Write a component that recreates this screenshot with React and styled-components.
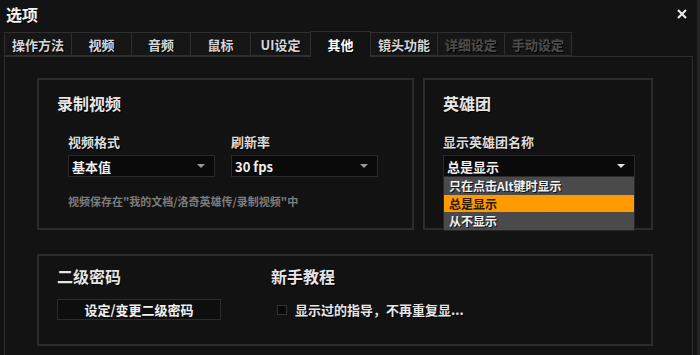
import React from 'react';
import styled, { createGlobalStyle } from 'styled-components';

const GlobalStyle = createGlobalStyle`
  html,
  body {
    margin: 0;
    padding: 0;
    background-color: #131313;
  }

  body {
    font-family: 'Noto Sans CJK SC', 'Noto Sans', sans-serif;
    color: #e8e8e8;
  }
`;

const StyledWindow = styled.div`
  position: relative;
  width: 700px;
  height: 355px;
  overflow: hidden;
  box-sizing: border-box;
  background-color: #131313;
  border-right: 3px solid #242424;
`;

const StyledTitleBar = styled.div`
  display: flex;
  justify-content: space-between;
  align-items: center;
  height: 31px;
  padding: 0 10px 4px 6px;
  box-sizing: border-box;
`;

const StyledTitle = styled.h1`
  margin: 0;
  font-size: 16px;
  font-weight: 700;
  line-height: 20px;
  color: #f2f2f2;
  text-shadow: 1px 1px 0 #000;
`;

const StyledClose = styled.button`
  display: flex;
  padding: 0;
  border: none;
  background: none;
  cursor: pointer;
`;

const StyledTabBar = styled.div`
  display: flex;
  align-items: flex-end;
  height: 25px;
  padding-left: 4px;
`;

const StyledTab = styled.div`
  position: relative;
  z-index: ${({ active }) => (active ? 1 : 0)};
  display: flex;
  justify-content: center;
  align-items: center;
  width: ${({ width }) => width}px;
  height: ${({ active }) => (active ? 26 : 24)}px;
  margin-right: -1px;
  margin-bottom: ${({ active }) => (active ? -1 : 0)}px;
  box-sizing: border-box;
  border: 1px solid #2f2f2f;
  border-bottom: ${({ active }) => (active ? 'none' : '1px solid #2f2f2f')};
  background-color: ${({ active }) => (active ? '#131313' : '#161616')};
  font-size: 13px;
  font-weight: 700;
  color: ${({ disabled, active }) => {
    if (disabled) return '#4d4d4d';
    if (active) return '#ffffff';
    return '#d6d6d6';
  }};
  text-shadow: ${({ disabled }) =>
    disabled ? '1px 1px 0 #000, -1px -1px 0 #262626' : '1px 1px 0 #000'};
`;

const StyledPanel = styled.div`
  width: 689px;
  height: 310px;
  margin-left: 4px;
  padding: 21px 0 0 32px;
  box-sizing: border-box;
  border: 1px solid #2f2f2f;
  border-bottom: none;
`;

const StyledRow = styled.div`
  display: flex;
  gap: 9px;
  width: 616px;
  margin-top: ${({ gapTop }) => gapTop || 0}px;
`;

const StyledGroup = styled.section`
  position: relative;
  display: ${({ columns }) => (columns ? 'flex' : 'block')};
  width: ${({ width }) => width}px;
  height: ${({ height }) => height}px;
  padding: ${({ padTop }) => padTop}px 0 0 18px;
  box-sizing: border-box;
  border: 2px solid #2c2c2c;
  background-color: #121212;
`;

const StyledColumn = styled.div`
  width: ${({ width }) => (width ? `${width}px` : 'auto')};
`;

const StyledHeading = styled.h2`
  margin: 0;
  font-size: 16px;
  font-weight: 700;
  line-height: 20px;
  color: #e6e6e6;
  text-shadow: 1px 1px 0 #000;
`;

const StyledFields = styled.div`
  display: flex;
  gap: 16px;
  margin: 21px 0 0 ${({ indent }) => indent || 0}px;
`;

const StyledField = styled.div`
  position: relative;
  width: ${({ width }) => width}px;
`;

const StyledLabel = styled.div`
  margin-bottom: 5px;
  font-size: 13px;
  font-weight: 700;
  line-height: 16px;
  color: #dcdcdc;
  text-shadow: 1px 1px 0 #000;
`;

const StyledSelect = styled.div`
  display: flex;
  justify-content: space-between;
  align-items: center;
  height: 22px;
  padding: 0 9px 0 3px;
  box-sizing: border-box;
  border: 1px solid #2a2a2a;
  background-color: #0a0a0a;
  font-size: 13px;
  font-weight: 700;
  color: #f0f0f0;
`;

const StyledArrow = styled.span`
  width: 0;
  height: 0;
  border-left: 4px solid transparent;
  border-right: 4px solid transparent;
  border-top: 4px solid ${({ bright }) => (bright ? '#e0e0e0' : '#9a9a9a')};
`;

const StyledHint = styled.p`
  margin: 17px 0 0 11px;
  font-size: 11px;
  font-weight: 700;
  line-height: 14px;
  color: #7c7c7c;
`;

const StyledMenu = styled.ul`
  position: absolute;
  top: 100%;
  left: 0;
  right: 0;
  margin: 0;
  padding: 0;
  list-style: none;
  border: 1px solid #262626;
  border-top: none;
`;

const StyledMenuItem = styled.li`
  height: 17.5px;
  overflow: hidden;
  padding-left: 5px;
  font-size: 12px;
  font-weight: 700;
  line-height: 17.5px;
  color: ${({ selected }) => (selected ? '#2a1800' : '#f2f2f2')};
  background-color: ${({ selected }) => (selected ? '#ff9a00' : '#4a4a4a')};
  text-shadow: ${({ selected }) => (selected ? 'none' : '1px 1px 0 #111')};
`;

const StyledButton = styled.button`
  width: 164px;
  height: 21px;
  margin-top: 13px;
  padding: 0;
  border: 1px solid #2c2c2c;
  background-color: #0e0e0e;
  font-family: inherit;
  font-size: 13px;
  font-weight: 700;
  line-height: 19px;
  color: #f2f2f2;
  cursor: pointer;
`;

const StyledCheckRow = styled.label`
  display: flex;
  align-items: center;
  gap: 8px;
  height: 21px;
  margin: 13px 0 0 6px;
  font-size: 13px;
  font-weight: 700;
  color: #e6e6e6;
  text-shadow: 1px 1px 0 #000;
`;

const StyledCheckbox = styled.span`
  width: 10px;
  height: 10px;
  box-sizing: border-box;
  border: 1px solid #333;
  background-color: #080808;
`;

const tabs = [
  { label: '操作方法', width: 68 },
  { label: '视频', width: 61 },
  { label: '音频', width: 60 },
  { label: '鼠标', width: 61 },
  { label: 'UI设定', width: 61 },
  { label: '其他', width: 61, active: true },
  { label: '镜头功能', width: 68 },
  { label: '详细设定', width: 68, disabled: true },
  { label: '手动设定', width: 68, disabled: true }
];

const teamOptions = ['只在点击Alt键时显示', '总是显示', '从不显示'];

const App = () => (
  <>
    <GlobalStyle />
    <StyledWindow>
      <StyledTitleBar>
        <StyledTitle>选项</StyledTitle>
        <StyledClose type="button" aria-label="关闭">
          <svg width="10" height="10" viewBox="0 0 10 10">
            <path d="M1 1 L9 9 M9 1 L1 9" stroke="#f0f0f0" strokeWidth="2" />
          </svg>
        </StyledClose>
      </StyledTitleBar>

      <StyledTabBar>
        {tabs.map(tab => (
          <StyledTab
            key={tab.label}
            width={tab.width}
            active={tab.active}
            disabled={tab.disabled}
          >
            {tab.label}
          </StyledTab>
        ))}
      </StyledTabBar>

      <StyledPanel>
        <StyledRow>
          <StyledGroup width={377} height={152} padTop={13}>
            <StyledHeading>录制视频</StyledHeading>
            <StyledFields indent={11}>
              <StyledField width={147}>
                <StyledLabel>视频格式</StyledLabel>
                <StyledSelect>
                  基本值
                  <StyledArrow />
                </StyledSelect>
              </StyledField>
              <StyledField width={147}>
                <StyledLabel>刷新率</StyledLabel>
                <StyledSelect>
                  30 fps
                  <StyledArrow />
                </StyledSelect>
              </StyledField>
            </StyledFields>
            <StyledHint>视频保存在"我的文档/洛奇英雄传/录制视频"中</StyledHint>
          </StyledGroup>

          <StyledGroup width={230} height={152} padTop={13}>
            <StyledHeading>英雄团</StyledHeading>
            <StyledFields>
              <StyledField width={192}>
                <StyledLabel>显示英雄团名称</StyledLabel>
                <StyledSelect>
                  总是显示
                  <StyledArrow bright />
                </StyledSelect>
                <StyledMenu>
                  {teamOptions.map(option => (
                    <StyledMenuItem key={option} selected={option === '总是显示'}>
                      {option}
                    </StyledMenuItem>
                  ))}
                </StyledMenu>
              </StyledField>
            </StyledFields>
          </StyledGroup>
        </StyledRow>

        <StyledRow gapTop={24}>
          <StyledGroup width={616} height={92} padTop={10} columns>
            <StyledColumn width={214}>
              <StyledHeading>二级密码</StyledHeading>
              <StyledButton type="button">设定/变更二级密码</StyledButton>
            </StyledColumn>
            <StyledColumn>
              <StyledHeading>新手教程</StyledHeading>
              <StyledCheckRow>
                <StyledCheckbox />
                显示过的指导，不再重复显...
              </StyledCheckRow>
            </StyledColumn>
          </StyledGroup>
        </StyledRow>
      </StyledPanel>
    </StyledWindow>
  </>
);

export default App;
